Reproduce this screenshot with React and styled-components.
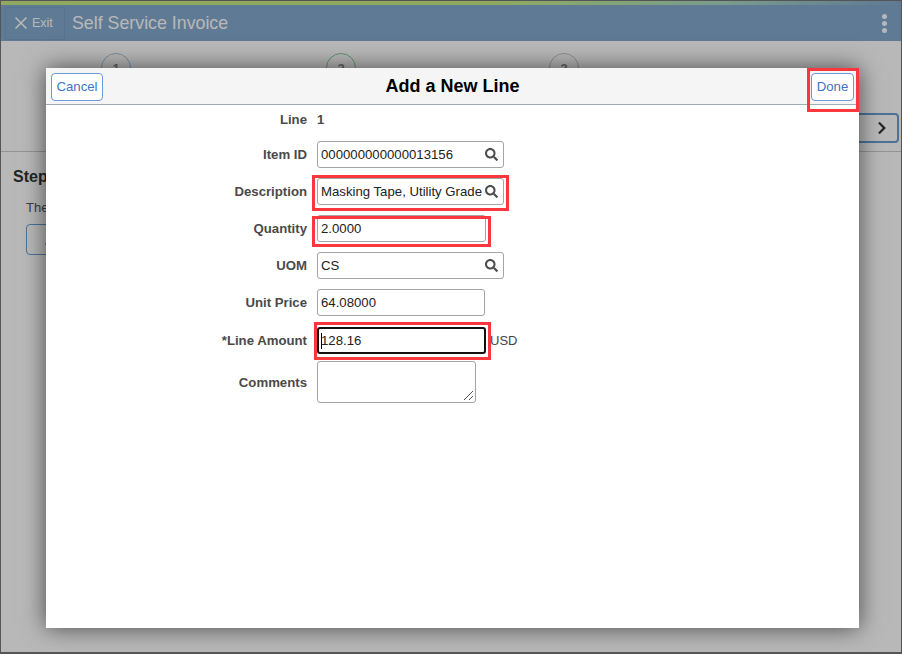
import React from "react";
import styled, { createGlobalStyle } from "styled-components";
import { FaSearch, FaChevronRight } from "react-icons/fa";

const Global = createGlobalStyle`
  html, body { margin: 0; padding: 0; background: #fff; }
  * { box-sizing: border-box; }
  body { font-family: "Liberation Sans", Arial, sans-serif; }
`;

const Frame = styled.div`
  position: relative;
  width: 902px;
  height: 654px;
  overflow: hidden;
  background: #fff;
  border: 1px solid #555;
  border-width: 1px 1px 2px 1px;
`;

const TopStripe = styled.div`
  height: 4px;
  background: linear-gradient(90deg, #c6ec86 0%, #c6ec86 55%, #a9d9c4 80%, #84a9cd 100%);
`;

const Banner = styled.header`
  height: 36px;
  background: #84a9cd;
  display: flex;
  align-items: center;
  color: #fff;
`;

const ExitBox = styled.div`
  width: 60px;
  height: 33px;
  margin-left: 4px;
  display: flex;
  align-items: center;
  gap: 4px;
  padding-left: 8px;
  font-size: 12.5px;
  border: 1px solid rgba(60, 90, 120, 0.1);
`;

const BannerTitle = styled.div`
  font-size: 17.8px;
  margin-left: 7px;
  flex: 1;
`;

const Dots = styled.div`
  display: flex;
  flex-direction: column;
  gap: 2px;
  margin-right: 14px;
`;

const Dot = styled.span`
  width: 5px;
  height: 5px;
  border-radius: 50%;
  background: #fff;
`;

const Train = styled.div`
  height: 111px;
  border-bottom: 1px solid #ccc;
  display: flex;
  flex-direction: column;
`;

const StepsRow = styled.div`
  display: flex;
  padding: 12px 0 0 100px;
`;

const StepCircle = styled.div`
  width: 30px;
  height: 30px;
  border-radius: 50%;
  background: #fff;
  border: 1px solid ${(p) => p.$tone};
  color: #8a8a8a;
  font-size: 13px;
  font-weight: bold;
  display: flex;
  align-items: center;
  justify-content: center;
  margin-right: ${(p) => p.$gap || 0}px;
`;

const NextRow = styled.div`
  display: flex;
  justify-content: flex-end;
  padding: 30px 2px 0 0;
`;

const NextButton = styled.div`
  width: 44px;
  height: 30px;
  border: 2px solid #6b9fd4;
  border-radius: 4px;
  display: flex;
  align-items: center;
  justify-content: flex-end;
  padding-right: 8px;
  color: #333;
  font-size: 14px;
`;

const Section = styled.section`
  padding: 15px 12px;
`;

const StepHeading = styled.h2`
  margin: 0;
  font-size: 16px;
  line-height: 20px;
  color: #333;
`;

const StepText = styled.p`
  margin: 13px 0 8px 13px;
  font-size: 13px;
  line-height: 16px;
  color: #555;
`;

const StepButton = styled.div`
  margin-left: 13px;
  width: 100px;
  height: 31px;
  border: 1px solid #6b9fd4;
  border-radius: 4px;
  color: #3b7ac4;
  font-size: 14px;
  display: flex;
  align-items: center;
  padding-left: 18px;
`;

const Overlay = styled.div`
  position: absolute;
  inset: 0;
  background: rgba(0, 0, 0, 0.28);
`;

const Modal = styled.div`
  position: absolute;
  left: 45px;
  top: 67px;
  width: 813px;
  height: 560px;
  background: #fff;
  box-shadow: 0 0 22px rgba(0, 0, 0, 0.6);
  display: flex;
  flex-direction: column;
`;

const ModalHeader = styled.div`
  position: relative;
  height: 37px;
  flex: none;
  background: #f5f5f5;
  border-bottom: 1px solid #a3abb8;
  display: grid;
  grid-template-columns: 1fr auto 1fr;
  align-items: center;
  padding: 0 5px;
`;

const HeaderButton = styled.div`
  height: 28px;
  margin-top: 1px;
  width: ${(p) => p.$w}px;
  justify-self: ${(p) => p.$side};
  background: #fff;
  border: 1px solid #6a9bdc;
  border-radius: 4px;
  color: #3d74c4;
  font-size: 13.2px;
  display: flex;
  align-items: center;
  justify-content: center;
`;

const ModalTitle = styled.h1`
  margin: 0;
  font-size: 18px;
  font-weight: bold;
  color: #000;
`;

const DoneMark = styled.div`
  position: absolute;
  left: 761px;
  top: 0;
  width: 52px;
  height: 44px;
  border: 3px solid #f9373c;
  pointer-events: none;
`;

const Form = styled.div`
  display: flex;
  flex-direction: column;
`;

const LineRow = styled.div`
  display: flex;
  align-items: center;
  height: 31px;
  padding-bottom: 3px;
`;

const Row = styled.div`
  display: flex;
  align-items: center;
  height: ${(p) => p.$h}px;
`;

const CommentsRow = styled.div`
  display: flex;
  align-items: flex-start;
  margin-top: 1px;
`;

const Label = styled.div`
  width: 261px;
  flex: none;
  text-align: right;
  font-size: 13.2px;
  font-weight: bold;
  color: #4a4a4a;
  margin-right: 10px;
  padding-top: ${(p) => p.$pt || 0}px;
`;

const Plain = styled.div`
  font-size: 13px;
  font-weight: bold;
  color: #4a4a4a;
`;

const Field = styled.div`
  position: relative;
  width: ${(p) => p.$w}px;
  height: 27px;
  background: #fff;
  border: ${(p) => (p.$focus ? "2px solid #111" : "1px solid #a5a5a5")};
  border-radius: 3px;
  display: flex;
  align-items: center;
  justify-content: space-between;
  padding: 0 5px 0 ${(p) => (p.$focus ? 2 : 3)}px;
  font-size: 13.2px;
  color: #222;
  white-space: nowrap;
`;

const Mark = styled.span`
  position: absolute;
  top: ${(p) => p.$t}px;
  right: ${(p) => p.$r}px;
  bottom: ${(p) => p.$b}px;
  left: ${(p) => p.$l}px;
  border: 3px solid #f9373c;
  pointer-events: none;
`;

const SearchIcon = styled(FaSearch)`
  flex: none;
  width: 13px;
  height: 13px;
  color: #4d4d4d;
`;

const Caret = styled.span`
  position: absolute;
  left: 2px;
  top: 4px;
  width: 1px;
  height: 16px;
  background: #000;
`;

const Unit = styled.span`
  margin-left: 4px;
  font-size: 13px;
  color: #444;
`;

const Comments = styled.div`
  position: relative;
  width: 159px;
  height: 42px;
  border: 1px solid #a5a5a5;
  border-radius: 3px;
  background: #fff;
`;

const Grip = styled.svg`
  position: absolute;
  right: 1px;
  bottom: 1px;
`;

const rows = [
  { label: "Item ID", w: 187, val: "000000000000013156", search: true, h: 37 },
  { label: "Description", w: 187, val: "Masking Tape, Utility Grade", search: true, h: 37, mark: { t: -4, r: -6, b: -7, l: -6 } },
  { label: "Quantity", w: 169, val: "2.0000", h: 37, mark: { t: 0, r: -6, b: -6, l: -6 } },
  { label: "UOM", w: 187, val: "CS", search: true, h: 37 },
  { label: "Unit Price", w: 168, val: "64.08000", h: 37 },
];

export default function App() {
  return (
    <Frame>
      <Global />
      <TopStripe />
      <Banner>
        <ExitBox>
          <svg width="14" height="14" viewBox="0 0 14 14" fill="none" stroke="#fff" strokeWidth="1.6">
            <path d="M1.5 1.5 12.5 12.5M12.5 1.5 1.5 12.5" />
          </svg>
          Exit
        </ExitBox>
        <BannerTitle>Self Service Invoice</BannerTitle>
        <Dots>
          <Dot />
          <Dot />
          <Dot />
        </Dots>
      </Banner>
      <Train>
        <StepsRow>
          <StepCircle $tone="#a9c4e0" $gap={195}>1</StepCircle>
          <StepCircle $tone="#7fcf9c" $gap={193}>2</StepCircle>
          <StepCircle $tone="#c4c4c4">3</StepCircle>
        </StepsRow>
        <NextRow>
          <NextButton>
            <FaChevronRight />
          </NextButton>
        </NextRow>
      </Train>
      <Section>
        <StepHeading>Step 2</StepHeading>
        <StepText>The</StepText>
        <StepButton>Add</StepButton>
      </Section>
      <Overlay />
      <Modal>
        <ModalHeader>
          <HeaderButton $w={52} $side="start">Cancel</HeaderButton>
          <ModalTitle>Add a New Line</ModalTitle>
          <HeaderButton $w={43} $side="end">Done</HeaderButton>
          <DoneMark />
        </ModalHeader>
        <Form>
          <LineRow>
            <Label>Line</Label>
            <Plain>1</Plain>
          </LineRow>
          {rows.map((r) => (
            <Row key={r.label} $h={r.h}>
              <Label>{r.label}</Label>
              <Field $w={r.w}>
                {r.val}
                {r.search && <SearchIcon />}
                {r.mark && <Mark $t={r.mark.t} $r={r.mark.r} $b={r.mark.b} $l={r.mark.l} />}
              </Field>
            </Row>
          ))}
          <Row $h={39}>
            <Label>*Line Amount</Label>
            <Field $w={169} $focus>
              <Caret />
              128.16
              <Mark $t={-7} $r={-7} $b={-8} $l={-5} />
            </Field>
            <Unit>USD</Unit>
          </Row>
          <CommentsRow>
            <Label $pt={14}>Comments</Label>
            <Comments>
              <Grip width="11" height="11" viewBox="0 0 11 11" fill="none" stroke="#555" strokeWidth="1">
                <path d="M1 10 10 1M6 10 10 6" />
              </Grip>
            </Comments>
          </CommentsRow>
        </Form>
      </Modal>
    </Frame>
  );
}
